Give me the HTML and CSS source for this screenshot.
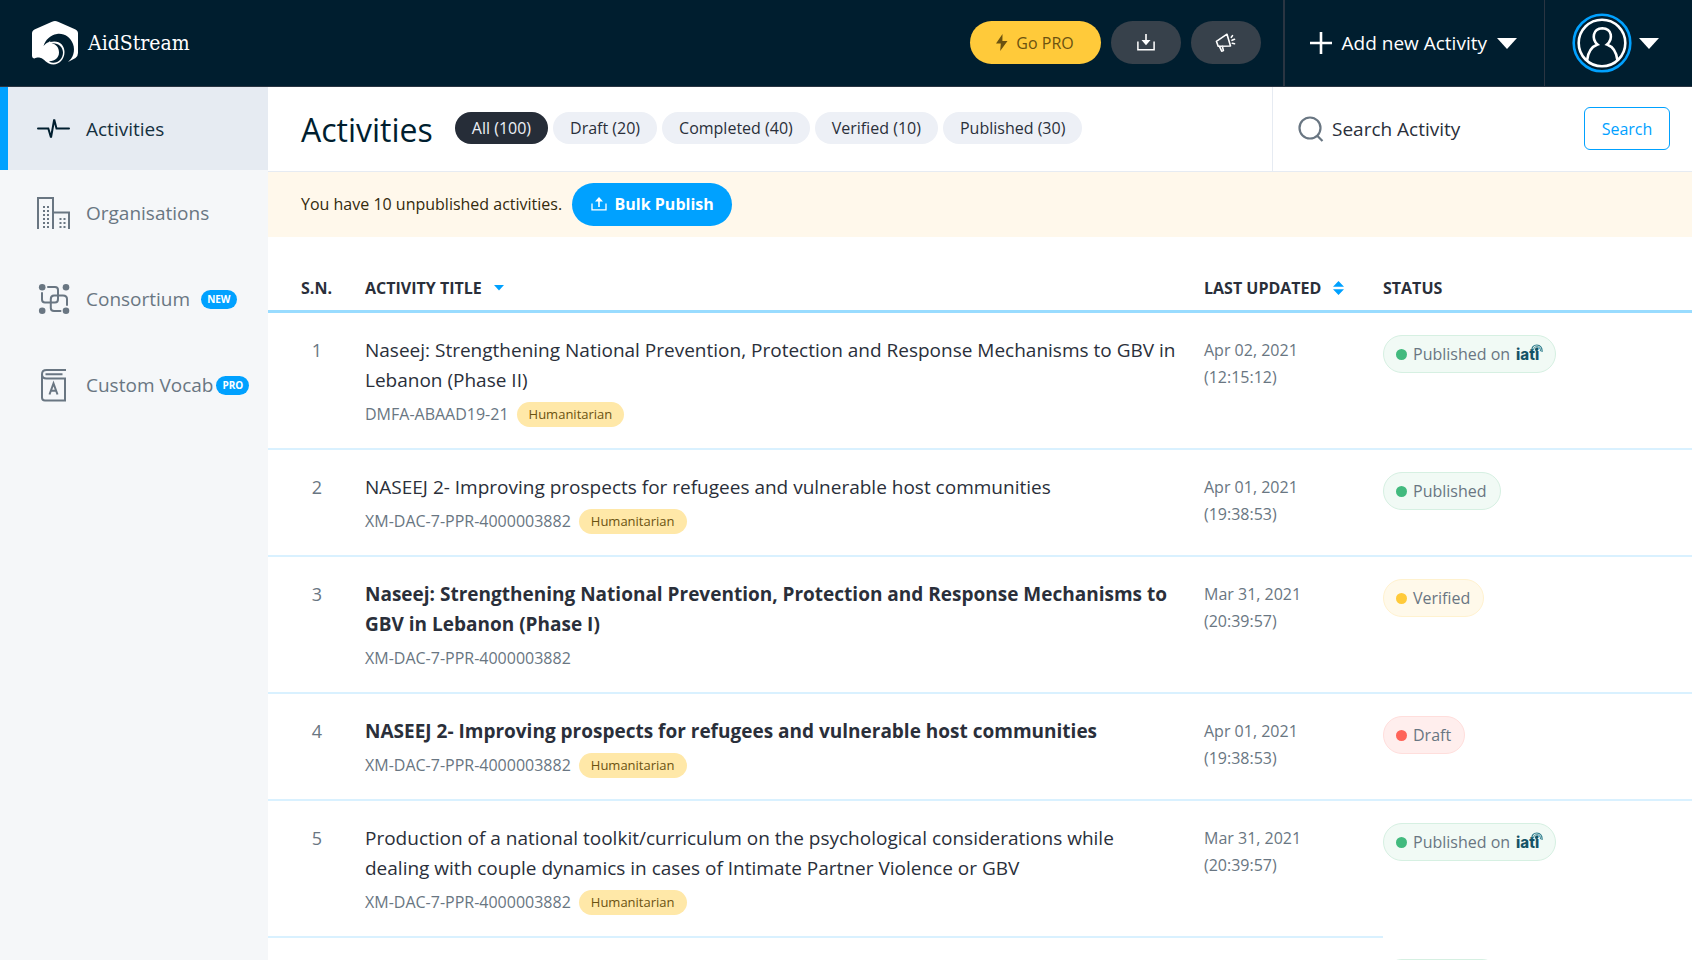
FILE: index.html
```html
<!DOCTYPE html>
<html lang="en">
<head>
<meta charset="utf-8">
<title>AidStream – Activities</title>
<meta name="viewport" content="width=device-width, initial-scale=1">
<link rel="stylesheet" href="styles.css">
</head>
<body>
<svg class="defs" width="0" height="0" aria-hidden="true">
  <symbol id="iati-swirl" viewBox="0 0 12 12">
    <path d="M1 6.500C.5 3.500 2.500 1 5.800 1 9.500 1 11.500 4 11 8" fill="none" stroke="#2e7d8c" stroke-width="1.200"/>
    <path d="M2.600 6C2.600 4 4 2.700 5.800 2.700 8.400 2.700 9.800 4.500 9.400 7.200" fill="none" stroke="#2e7d8c" stroke-width="1"/>
    <circle cx="5.600" cy="5.400" r="1.600" fill="#155366"/>
  </symbol>
</svg>
<header class="topbar">
  <a class="brand" href="#">
    <svg class="brand-mark" width="46" height="44" viewBox="0 0 46 44" aria-hidden="true">
      <path d="M23 0 Q24.500 0 26 .8 L43 8.300 Q46 9.500 46 12.500 V32 Q46 35 43.500 37 L36 41 C41 37 43.500 30 41 23 C38.500 16 32 12 25 13 C18 14 13.500 19 11.500 25 C13.500 22.500 15.500 21.500 17 21 L18.500 19.500 L18 21 C27 18.500 32.500 24 32.500 31 C32.500 38.500 27 43.500 21.500 43.500 C14 43.500 13 37.500 8 36.700 C5.500 36.300 4 37 2.500 37.500 C1 37.500 0 36.500 0 34.500 V12.500 Q0 9.500 3 8.300 L20 .8 Q21.500 0 23 0Z" fill="#fff"/>
      <path d="M19.500 22.300 C26 21.500 31 26 31 31.500 C31 37.500 26.500 42 21 41.700 C18.500 41.500 17.800 40.800 17 40.200 C22.500 40.500 27 37 27 31.500 C27 26.500 24 23.200 19.500 22.300Z" fill="#001e2f"/>
    </svg>
    <span class="brand-name">AidStream</span>
  </a>
  <div class="quick">
    <button class="pill-btn go-pro" type="button">
      <svg width="12" height="17" viewBox="0 0 12 17" aria-hidden="true"><path d="M6.500 0 L0 9.500 H4.800 L4.200 17 L11.500 7 H6.400Z" fill="#6b5210"/></svg>
      Go PRO
    </button>
    <button class="pill-btn icon-btn" type="button" aria-label="Download">
      <svg width="18" height="17" viewBox="0 0 18 17" aria-hidden="true"><path d="M.9 7.500V15.800H17.100V7.500" fill="none" stroke="#fff" stroke-width="1.500"/><path d="M8.200 0H9.800V6H13.500L9 11.200 4.500 6H8.200Z" fill="#fff"/></svg>
    </button>
    <button class="pill-btn icon-btn" type="button" aria-label="Announcements">
      <svg width="21" height="20" viewBox="0 0 21 20" fill="none" stroke="#fff" stroke-width="1.600" stroke-linecap="round" stroke-linejoin="round" aria-hidden="true"><path d="M12 1.200 L1.400 8.300 L3.200 13.200 L15.500 13 Z M4.300 13.200 L6.700 18.200 L8.400 17.600 L7.300 13"/><path d="M16.300 4.300 L17.500 2.600 M17 7.300 L19.500 6.300 M17.300 10.200 L19.500 10.700"/></svg>
    </button>
  </div>
  <button class="add-new" type="button">
    <svg width="22" height="22" viewBox="0 0 22 22" aria-hidden="true"><path d="M11 0V22M0 11H22" stroke="#fff" stroke-width="2.600"/></svg>
    <span>Add new Activity</span>
    <svg class="caret" width="20" height="11" viewBox="0 0 20 11" aria-hidden="true"><path d="M0 0H20L10 11Z" fill="#fff"/></svg>
  </button>
  <button class="account" type="button" aria-label="Account">
    <svg width="60" height="60" viewBox="0 0 60 60" fill="none" aria-hidden="true">
      <circle cx="30" cy="30" r="28.300" stroke="#00a1ff" stroke-width="2.600"/>
      <circle cx="30" cy="30" r="23.300" stroke="#fff" stroke-width="2.600"/>
      <path d="M15 47.500 C16 39 20 33.500 25.500 31.500 C19.500 26.500 20.500 15.500 30.300 15.200 C40.500 15.500 41 26.500 35 31.500 C40.500 33.500 44.500 39 45.500 47.500" stroke="#fff" stroke-width="2.600"/>
    </svg>
    <svg width="20" height="11" viewBox="0 0 20 11" aria-hidden="true"><path d="M0 0H20L10 11Z" fill="#fff"/></svg>
  </button>
</header>
<div class="shell">
  <nav class="sidebar">
    <a class="nav-item active" href="#">
      <svg width="34" height="34" viewBox="0 0 34 34" aria-hidden="true"><path d="M1 16.500H11.300L14 25.500 17.200 7.500 19.500 16.500H32" fill="none" stroke="#001e2f" stroke-width="2" stroke-linecap="round" stroke-linejoin="miter"/></svg>
      <span>Activities</span>
    </a>
    <a class="nav-item" href="#">
      <svg width="34" height="34" viewBox="0 0 34 34" fill="none" stroke="#697682" stroke-width="2" aria-hidden="true">
        <path d="M1 33V2H16V33M16 16.500H32V33"/>
        <path d="M7 10V33M11 10V33" stroke-dasharray="2 2"/>
        <path d="M23.500 22V33M27.500 22V33" stroke-dasharray="2 2"/>
      </svg>
      <span>Organisations</span>
    </a>
    <a class="nav-item" href="#">
      <svg width="34" height="34" viewBox="0 0 34 34" fill="none" stroke="#697682" stroke-width="2" stroke-linecap="round" aria-hidden="true">
        <g fill="#697682" stroke="none"><circle cx="5.200" cy="5.200" r="3.300"/><circle cx="29" cy="5.200" r="3.300"/><circle cx="5.200" cy="28.800" r="3.300"/><circle cx="29" cy="28.800" r="3.300"/></g>
        <path d="M11 5H18Q21 5 21 8V17Q21 20.500 18 20.500H8Q5 20.500 5 17.500V11"/>
        <path d="M23.500 29H17Q13.800 29 13.800 26V17Q13.800 13.500 17 13.500H26Q30 13.500 30 17V23"/>
      </svg>
      <span>Consortium</span><b class="tag tag-new">NEW</b>
    </a>
    <a class="nav-item" href="#">
      <svg width="34" height="34" viewBox="0 0 34 34" fill="none" stroke="#697682" stroke-width="2" aria-hidden="true">
        <path d="M29 2H9.500Q5 2 5 6.300V29.500Q5 32.500 8 32.500H28V10.500H9.500Q5 10.500 5 6.300M8.500 6.300H25.500"/>
        <path d="M12.500 26.500 L16.500 15.500 L20.500 26.500 M14 22.800H19"/>
      </svg>
      <span>Custom Vocab</span><b class="tag tag-pro">PRO</b>
    </a>
  </nav>
  <main class="main">
    <div class="toolbar">
      <div class="heading">
        <h1>Activities</h1>
        <div class="filters">
          <button class="filter selected" type="button">All (100)</button>
          <button class="filter" type="button">Draft (20)</button>
          <button class="filter" type="button">Completed (40)</button>
          <button class="filter" type="button">Verified (10)</button>
          <button class="filter" type="button">Published (30)</button>
        </div>
      </div>
      <form class="search">
        <label for="q" aria-label="Search Activity"><svg width="26" height="26" viewBox="0 0 26 26" fill="none" stroke="#697682" stroke-width="2.200" aria-hidden="true"><circle cx="12" cy="12" r="10.500"/><path d="M19 19.500L24.500 25"/></svg></label>
        <input id="q" type="text" placeholder="Search Activity">
        <button type="submit">Search</button>
      </form>
    </div>
    <div class="notice">
      <span>You have 10 unpublished activities.</span>
      <button class="bulk" type="button">
        <svg width="16" height="14" viewBox="0 0 16 14" aria-hidden="true"><path d="M1 6.500V12.800H15V6.500" fill="none" stroke="#fff" stroke-width="1.300"/><path d="M7.200 10V4.500H4L8 0 12 4.500H8.800V10Z" fill="#fff"/></svg>
        Bulk Publish
      </button>
    </div>
    <table class="activities">
      <colgroup><col class="c-sn"><col><col class="c-date"><col class="c-status"></colgroup>
      <thead>
        <tr>
          <th>S.N.</th>
          <th><span class="sortable">ACTIVITY TITLE <svg width="10" height="14" viewBox="0 0 10 14" aria-hidden="true"><path d="M0 4H10L5 9.500Z" fill="#00a1ff"/></svg></span></th>
          <th><span class="sortable">LAST UPDATED <svg width="11" height="14" viewBox="0 0 11 14" aria-hidden="true"><path d="M0 5.700H11L5.500 0ZM0 8.300H11L5.500 14Z" fill="#00a1ff"/></svg></span></th>
          <th>STATUS</th>
        </tr>
      </thead>
      <tbody>
        <tr>
          <td>1</td>
          <td><div class="title">Naseej: Strengthening National Prevention, Protection and Response Mechanisms to GBV in Lebanon (Phase II)</div><div class="meta">DMFA-ABAAD19-21 <span class="label">Humanitarian</span></div></td>
          <td>Apr 02, 2021<br>(12:15:12)</td>
          <td><span class="status published">Published on <span class="iati">iati<svg width="12" height="12"><use href="#iati-swirl"/></svg></span></span></td>
        </tr>
        <tr>
          <td>2</td>
          <td><div class="title">NASEEJ 2- Improving prospects for refugees and vulnerable host communities</div><div class="meta">XM-DAC-7-PPR-4000003882 <span class="label">Humanitarian</span></div></td>
          <td>Apr 01, 2021<br>(19:38:53)</td>
          <td><span class="status published">Published</span></td>
        </tr>
        <tr>
          <td>3</td>
          <td><div class="title unread">Naseej: Strengthening National Prevention, Protection and Response Mechanisms to GBV in Lebanon (Phase I)</div><div class="meta">XM-DAC-7-PPR-4000003882</div></td>
          <td>Mar 31, 2021<br>(20:39:57)</td>
          <td><span class="status verified">Verified</span></td>
        </tr>
        <tr>
          <td>4</td>
          <td><div class="title unread">NASEEJ 2- Improving prospects for refugees and vulnerable host communities</div><div class="meta">XM-DAC-7-PPR-4000003882 <span class="label">Humanitarian</span></div></td>
          <td>Apr 01, 2021<br>(19:38:53)</td>
          <td><span class="status draft">Draft</span></td>
        </tr>
        <tr class="last">
          <td>5</td>
          <td><div class="title">Production of a national toolkit/curriculum on the psychological considerations while dealing with couple dynamics in cases of Intimate Partner Violence or GBV</div><div class="meta">XM-DAC-7-PPR-4000003882 <span class="label">Humanitarian</span></div></td>
          <td>Mar 31, 2021<br>(20:39:57)</td>
          <td><span class="status published">Published on <span class="iati">iati<svg width="12" height="12"><use href="#iati-swirl"/></svg></span></span></td>
        </tr>
        <tr class="next">
          <td></td><td></td><td></td>
          <td><span class="status published"></span></td>
        </tr>
      </tbody>
    </table>
  </main>
</div>
</body>
</html>
```

FILE: styles.css
```css
*, *::before { box-sizing: border-box; }
body {
  margin: 0;
  height: 100vh;
  overflow: hidden;
  display: flex;
  flex-direction: column;
  font-family: "Open Sans", "Noto Sans", sans-serif;
  font-size: 16px;
  color: #2a2f3a;
  background: #fff;
}
button, input { font: inherit; color: inherit; border: 0; background: none; padding: 0; }
button { cursor: pointer; }
a { color: inherit; text-decoration: none; }
svg { flex: none; display: block; }
.defs { position: absolute; }

.topbar {
  flex: none;
  display: flex;
  height: 87px;
  background: #001e2f;
  border-bottom: 1px solid #2a3542;
  color: #fff;
}
.brand { display: flex; align-items: center; gap: 10px; padding-left: 32px; margin-right: auto; }
.brand-name { font-family: "DejaVu Serif Condensed", "DejaVu Serif", serif; font-size: 21px; }
.quick { display: flex; align-items: center; gap: 10px; padding: 0 22px 1px 0; }
.pill-btn { display: flex; align-items: center; justify-content: center; height: 43px; border-radius: 22px; }
.go-pro { width: 131px; gap: 8px; background: #ffca3a; color: #6b5210; }
.icon-btn { width: 70px; background: #37414b; }
.add-new {
  display: flex;
  align-items: center;
  gap: 10px;
  padding: 0 27px 0 25px;
  border-left: 2px solid #2a3542;
  border-right: 1px solid #2a3542;
  font-size: 19px;
}
.account { display: flex; align-items: center; gap: 7px; padding: 0 33px 0 27px; }

.shell { flex: 1; min-height: 0; display: flex; }
.sidebar { flex: none; width: 268px; background: #f5f7f9; }
.nav-item {
  display: flex;
  align-items: center;
  height: 86px;
  padding-left: 37px;
  color: #697682;
  font-size: 19px;
}
.nav-item svg { margin-right: 15px; }
.nav-item.active { height: 83px; padding-left: 29px; border-left: 8px solid #00a1ff; background: #e6ebf2; color: #14303f; }
.tag {
  height: 19px;
  padding: 0 6px;
  border-radius: 10px;
  background: #00a1ff;
  color: #fff;
  font-size: 10px;
  line-height: 19px;
}
.tag-new { margin-left: 11px; }
.tag-pro { margin-left: 3px; }

.main { flex: 1; min-width: 0; overflow: hidden; }
.toolbar { display: flex; height: 85px; border-bottom: 1px solid #e6ebf2; }
.heading { flex: 1; display: flex; align-items: center; padding-left: 33px; gap: 22px; }
h1 { margin: 0; font-size: 32px; font-weight: 400; color: #001e2f; }
.filters { display: flex; gap: 5px; padding-bottom: 2px; }
.filter { height: 32px; padding: 0 17px; border-radius: 16px; background: #edf0f6; }
.filter.selected { background: #262d38; color: #edf0f6; }
.search { flex: none; width: 420px; display: flex; align-items: center; gap: 8px; padding: 0 22px 1px 25px; border-left: 1px solid #e6ebf2; }
.search input { flex: 1; min-width: 0; font-size: 19px; outline: 0; }
.search input::placeholder { color: #2a2f3a; opacity: 1; }
.search button { width: 86px; height: 43px; border: 1px solid #00a1ff; border-radius: 6px; color: #00a1ff; }

.notice { display: flex; align-items: center; gap: 10px; height: 65px; padding: 0 0 1px 33px; background: #fff8eb; color: #332a0d; }
.bulk { display: flex; align-items: center; justify-content: center; gap: 8px; width: 160px; height: 43px; border-radius: 22px; background: #00a1ff; color: #fff; font-weight: 700; }

.activities { width: 100%; table-layout: fixed; border-collapse: separate; border-spacing: 0; color: #697682; }
.c-sn { width: 97px; }
.c-date { width: 179px; }
.c-status { width: 309px; }
.activities th { height: 76px; padding: 29px 0 0; border-bottom: 3px solid #99dcff; text-align: left; color: #2a2f3a; }
.sortable { display: flex; align-items: center; gap: 12px; }
.activities td { padding: 22px 0 21px; border-bottom: 2px solid #d9f1ff; vertical-align: top; line-height: 27px; }
.activities th:first-child { padding-left: 33px; }
.activities td:first-child { padding-left: 33px; padding-right: 32px; text-align: center; font-size: 18px; line-height: 30px; }
.activities td:nth-child(2) { padding-right: 24px; }
.activities td:nth-child(3) { padding-top: 24px; }
.title { font-size: 19px; line-height: 30px; color: #2a2f3a; }
.unread { font-weight: 700; }
.meta { display: flex; align-items: center; gap: 8px; height: 25px; margin-top: 7px; }
.label { padding: 0 12px; border-radius: 13px; background: #ffe8a8; color: #6b5210; font-size: 13px; line-height: 25px; }
.last td:last-child, .next td { border-bottom: 0; }

.status { display: inline-flex; align-items: center; gap: 6px; height: 38px; padding: 0 13px 0 12px; border: 1px solid; border-radius: 19px; vertical-align: top; }
.status::before { content: ""; width: 11px; height: 11px; border-radius: 50%; background: #42ba7e; }
.published { background: #f1faf5; border-color: #d6f0e2; }
.verified { background: #fff9ea; border-color: #fff2cf; }
.verified::before { background: #ffca3a; }
.draft { background: #ffeeed; border-color: #ffdedc; }
.draft::before { background: #ff6459; }
.next .status { width: 118px; }
.activities .next td:last-child { padding-top: 21px; }
.iati { position: relative; margin-right: 3px; padding-top: 1px; color: #155366; font-family: Inter, "Open Sans", sans-serif; font-size: 15px; font-weight: 800; }
.iati svg { position: absolute; right: -4px; top: 4px; }
```
